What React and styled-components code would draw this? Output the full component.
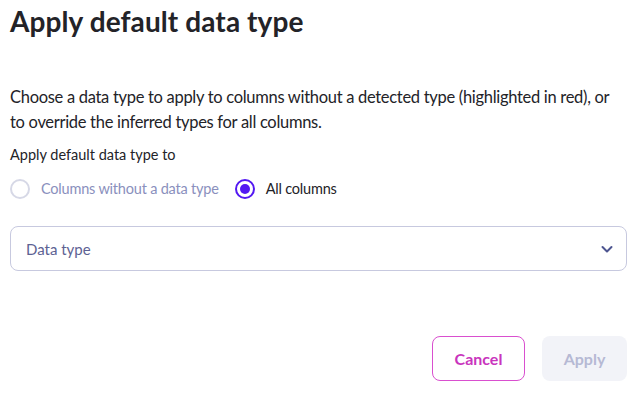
import React, { useState } from 'react';
import styled, { createGlobalStyle } from 'styled-components';

const GlobalStyle = createGlobalStyle`
    body {
        margin: 0;
        background: #ffffff;
        font-family: Lato, "Noto Sans", sans-serif;
        color: #1f1f24;
    }
`

const Dialog = styled.div`
    width: 638px;
    height: 396px;
    box-sizing: border-box;
    padding: 0 11px 0 10px;
    display: flex;
    flex-direction: column;
`

const Title = styled.h1`
    margin: 0;
    padding-top: 3px;
    font-size: 28px;
    line-height: 36px;
    font-weight: 700;
    color: #232328;
    letter-spacing: 0.1px;
`

const Description = styled.p`
    margin: 46px 0 0;
    font-size: 16.5px;
    line-height: 25px;
    letter-spacing: -0.3px;
    white-space: nowrap;
    color: #232328;
`

const Label = styled.div`
    margin-top: 9px;
    font-size: 14.5px;
    line-height: 22px;
    color: #232328;
`

const RadioGroup = styled.div`
    display: flex;
    align-items: center;
    gap: 16px;
    margin-top: 13px;
`

const RadioOption = styled.label`
    display: flex;
    align-items: center;
    gap: 11px;
    font-size: 14.5px;
    line-height: 20px;
    letter-spacing: -0.2px;
    cursor: pointer;
    color: ${({ $checked }) => ($checked ? '#232328' : '#8a90bd')};
`

const RadioCircle = styled.span`
    width: 20px;
    height: 20px;
    box-sizing: border-box;
    border-radius: 50%;
    border: 2px solid ${({ $checked }) => ($checked ? '#5318f2' : '#d6d8e6')};
    display: flex;
    align-items: center;
    justify-content: center;

    &::after {
        content: '';
        width: 10px;
        height: 10px;
        border-radius: 50%;
        background: #5318f2;
        display: ${({ $checked }) => ($checked ? 'block' : 'none')};
    }
`

const Select = styled.div`
    margin-top: 27px;
    height: 45px;
    box-sizing: border-box;
    border: 1px solid #c7c9df;
    border-radius: 8px;
    padding: 0 12px 0 15px;
    display: flex;
    align-items: center;
    justify-content: space-between;
    font-size: 15px;
    color: #5d6293;
`

const Footer = styled.div`
    margin-top: auto;
    margin-bottom: 15px;
    display: flex;
    justify-content: flex-end;
    gap: 17px;
`

const Button = styled.button`
    height: 45px;
    box-sizing: border-box;
    border-radius: 8px;
    font-family: inherit;
    font-size: 16px;
    font-weight: 700;
    padding: 0;
    width: ${({ $width }) => $width}px;
    cursor: pointer;
`

const CancelButton = styled(Button)`
    background: #ffffff;
    border: 1.5px solid #d94fcf;
    color: #c935bd;
`

const ApplyButton = styled(Button)`
    background: #f2f3f8;
    border: none;
    color: #b6b9d4;
    cursor: default;
`

const Chevron = () => (
    <svg width="14" height="14" viewBox="0 0 14 14" fill="none">
        <path d="M2.5 5 L7 9.5 L11.5 5" stroke="#4d5590" strokeWidth="2" strokeLinecap="round" strokeLinejoin="round" />
    </svg>
)

const App = () => {
    const [target, setTarget] = useState('all');

    return (
        <>
            <GlobalStyle />
            <Dialog>
                <Title>Apply default data type</Title>
                <Description>
                    Choose a data type to apply to columns without a detected type (highlighted in red), or
                    <br />
                    to override the inferred types for all columns.
                </Description>
                <Label>Apply default data type to</Label>
                <RadioGroup>
                    <RadioOption $checked={target === 'missing'} onClick={() => setTarget('missing')}>
                        <RadioCircle $checked={target === 'missing'} />
                        Columns without a data type
                    </RadioOption>
                    <RadioOption $checked={target === 'all'} onClick={() => setTarget('all')}>
                        <RadioCircle $checked={target === 'all'} />
                        All columns
                    </RadioOption>
                </RadioGroup>
                <Select>
                    Data type
                    <Chevron />
                </Select>
                <Footer>
                    <CancelButton $width={93}>Cancel</CancelButton>
                    <ApplyButton $width={85} disabled>Apply</ApplyButton>
                </Footer>
            </Dialog>
        </>
    );
};

export default App;
